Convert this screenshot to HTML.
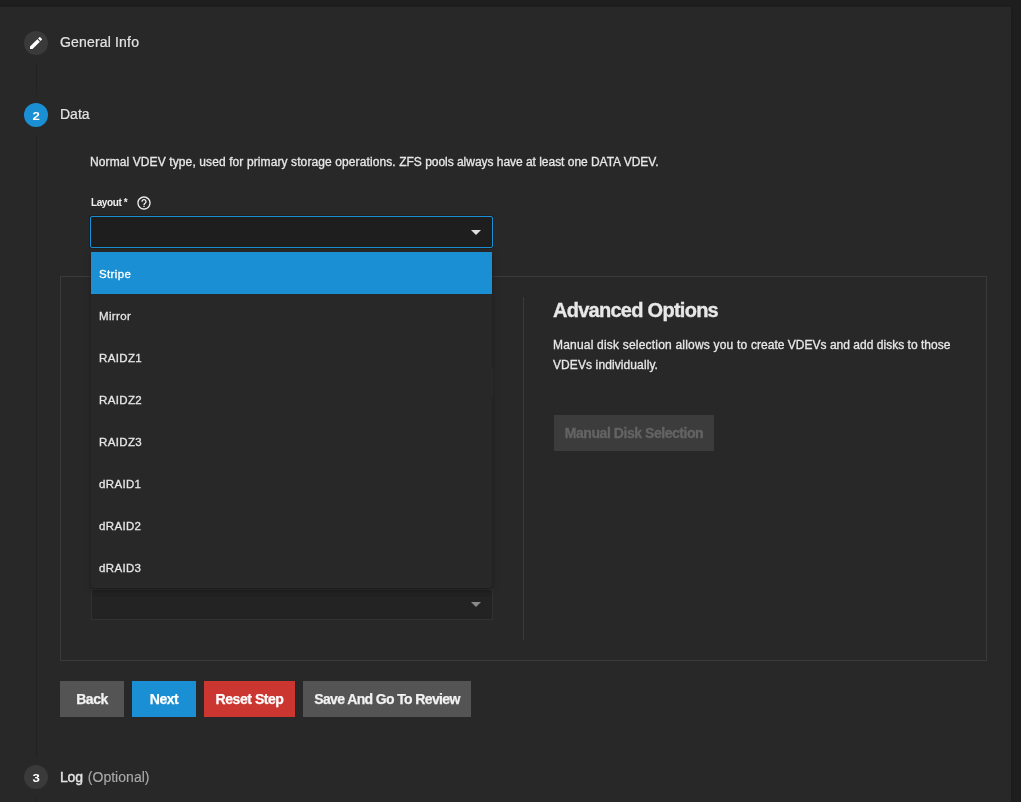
<!DOCTYPE html>
<html>
<head>
<meta charset="utf-8">
<title>Pool Creation Wizard</title>
<style>
*{box-sizing:border-box;margin:0;padding:0}
html,body{width:1021px;height:802px;overflow:hidden;background:#1e1e1e;font-family:"Liberation Sans",sans-serif;color:#e6e6e6}
.card{position:absolute;left:0;top:7px;width:1011px;height:820px;background:#282828;box-shadow:0 2px 1px -1px rgba(0,0,0,.2),0 1px 1px 0 rgba(0,0,0,.14),0 1px 3px 0 rgba(0,0,0,.12)}
.wrap{position:absolute;left:0;top:0;width:1021px;height:802px;will-change:transform}
.abs{position:absolute;white-space:nowrap}
.circle{position:absolute;width:24px;height:24px;border-radius:50%;background:#3a3a3a;color:#fff;font-size:11px;font-weight:700;text-align:center;line-height:26px}
.circle.active{background:#1b8fd3}
.vline{position:absolute;left:36px;width:1px;background:#222222}
.steplabel{font-size:14px;color:#e4e4e4;transform:translateY(-.6px);-webkit-text-stroke:.2px #e4e4e4}
.circle span{display:inline-block;transform:scaleX(1.2)}
.desc{font-size:12px;color:#e8e8e8;letter-spacing:.03px;-webkit-text-stroke:.3px #e8e8e8}
.lbl{font-size:10px;font-weight:700;color:#f0f0f0;letter-spacing:-.4px}
.select{position:absolute;left:90px;top:216px;width:403px;height:32px;background:#1e1e1e;border:1px solid #1b8fd3;border-radius:2px;box-shadow:0 0 0 1px rgba(0,0,0,.22)}
.arrow{position:absolute;width:0;height:0;border-left:5px solid transparent;border-right:5px solid transparent;border-top:5px solid #e0e0e0}
.panel{position:absolute;left:91px;top:252px;width:401px;height:336px;background:#282828;box-shadow:0 2px 4px -1px rgba(0,0,0,.2),0 4px 5px 0 rgba(0,0,0,.14),0 1px 10px 0 rgba(0,0,0,.12);border-radius:0 0 4px 4px}
.opt{height:42px;line-height:44px;padding-left:8px;font-size:11.5px;color:#e6e6e6;letter-spacing:.35px;-webkit-text-stroke:.3px #e6e6e6;overflow:hidden}
.opt.sel{background:#1b8fd3;color:#fff;-webkit-text-stroke-color:#fff}
.box{position:absolute;left:60px;top:276px;width:927px;height:385px;border:1px solid #3a3a3a}
.divider{position:absolute;left:523px;top:297px;width:1px;height:343px;background:#3a3a3a}
.h2{font-size:20px;font-weight:700;color:#e8e8e8;letter-spacing:-.73px;-webkit-text-stroke:.35px #e8e8e8}
.p{font-size:12px;color:#e8e8e8;letter-spacing:.1px;-webkit-text-stroke:.3px #e8e8e8}
.btn{position:absolute;top:681px;height:36px;line-height:36px;text-align:center;font-size:14px;font-weight:700;color:#f2f2f2;letter-spacing:-.45px;background:#545454;-webkit-text-stroke:.25px currentColor}
.btn.blue{background:#1b8fd3;color:#fff}
.btn.red{background:#cc3630;color:#fff}
.btn.dis{background:#3c3c3c;color:#646464;-webkit-text-stroke:.3px #646464}
.sel2{position:absolute;left:91px;top:589px;width:402px;height:31px;background:#232323;border:1px solid #323232}
</style>
</head>
<body>
<div class="card"></div>
<div class="wrap">

<div class="vline" style="top:63px;height:32px"></div>
<div class="vline" style="top:135px;height:622px"></div>
<div class="vline" style="top:797px;height:5px"></div>

<div class="circle" style="left:24px;top:31px">
<svg width="16" height="16" viewBox="0 0 24 24" style="position:absolute;left:4px;top:4px"><path fill="#fff" d="M3 17.25V21h3.75L17.81 9.94l-3.75-3.75L3 17.25zM20.71 7.04a.996.996 0 0 0 0-1.410l-2.340-2.340a.996.996 0 0 0-1.410 0l-1.830 1.830 3.750 3.750 1.830-1.830z"/></svg>
</div>
<div class="abs steplabel" style="left:60px;top:34.5px;letter-spacing:.17px">General Info</div>

<div class="circle active" style="left:24px;top:103px"><span>2</span></div>
<div class="abs steplabel" style="left:60px;top:106.5px">Data</div>

<div class="abs desc" style="left:90px;top:155px"><span style="letter-spacing:.105px">Normal VDEV type, used for primary storage operations. </span><span style="letter-spacing:-.03px">ZFS pools always have at least one DATA VDEV.</span></div>

<div class="abs lbl" style="left:91px;top:197px">Layout *</div>
<svg class="abs" style="left:136px;top:195px" width="16" height="16" viewBox="0 0 24 24"><path fill="#f0f0f0" d="M11 18h2v-2h-2v2zm1-16C6.480 2 2 6.480 2 12s4.480 10 10 10 10-4.480 10-10S17.520 2 12 2zm0 18c-4.410 0-8-3.590-8-8s3.590-8 8-8 8 3.590 8 8-3.590 8-8 8zm0-14c-2.210 0-4 1.790-4 4h2c0-1.100.9-2 2-2s2 .9 2 2c0 2-3 1.750-3 5h2c0-2.250 3-2.500 3-5 0-2.210-1.790-4-4-4z"/></svg>

<div class="select"></div>
<div class="arrow" style="left:471px;top:230px"></div>

<div class="box"></div>
<div class="divider"></div>

<div class="abs h2" style="left:553px;top:299px">Advanced Options</div>
<div class="abs p" style="left:553px;top:338px"><span style="letter-spacing:.2px">Manual disk selection allows you to </span><span style="letter-spacing:.02px">create VDEVs and add disks to those</span></div>
<div class="abs p" style="left:553px;top:358px">VDEVs individually.</div>
<div class="btn dis" style="left:554px;top:415px;width:160px">Manual Disk Selection</div>

<div class="abs" style="left:492px;top:367px;width:1px;height:31px;background:#323232"></div>
<div class="sel2"></div>
<div class="arrow" style="left:471px;top:602px;border-top-color:#8a8a8a"></div>

<div class="panel">
<div class="opt sel">Stripe</div>
<div class="opt">Mirror</div>
<div class="opt">RAIDZ1</div>
<div class="opt">RAIDZ2</div>
<div class="opt">RAIDZ3</div>
<div class="opt">dRAID1</div>
<div class="opt">dRAID2</div>
<div class="opt">dRAID3</div>
</div>

<div class="btn" style="left:60px;width:64px">Back</div>
<div class="btn blue" style="left:132px;width:64px">Next</div>
<div class="btn red" style="left:204px;width:91px">Reset Step</div>
<div class="btn" style="left:303px;width:168px;letter-spacing:-.63px">Save And Go To Review</div>

<div class="circle" style="left:24px;top:765px"><span>3</span></div>
<div class="abs steplabel" style="left:60px;top:769px;transform:none"><span style="letter-spacing:-.2px;-webkit-text-stroke:.4px #e4e4e4">Log</span><span style="color:#a8a8a8;-webkit-text-stroke:.15px #a8a8a8;margin-left:5px;letter-spacing:.03px">(Optional)</span></div>
</div>
</body>
</html>
